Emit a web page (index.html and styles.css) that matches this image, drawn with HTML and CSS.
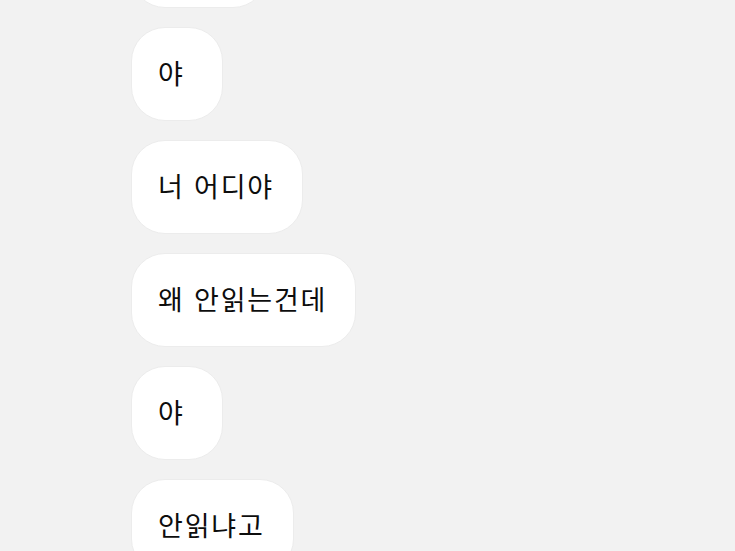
FILE: index.html
```html
<!DOCTYPE html>
<html lang="ko">
<head>
    <meta charset="UTF-8">
    <meta name="viewport" content="width=device-width, initial-scale=1.0">
    <title>채팅</title>
    <link rel="stylesheet" href="styles.css">
</head>
<body>
    <div class="chat-list">
        <div class="bubble">뭐하냐</div>
        <div class="bubble">야</div>
        <div class="bubble">너 어디야</div>
        <div class="bubble">왜 안읽는건데</div>
        <div class="bubble">야</div>
        <div class="bubble">안읽냐고</div>
    </div>
</body>
</html>
```

FILE: styles.css
```css
body {
    margin: 0;
    background-color: #f2f2f2;
    font-family: "Noto Sans CJK KR", "Noto Sans", sans-serif;
    overflow: hidden;
}

.chat-list {
    display: flex;
    flex-direction: column;
    align-items: flex-start;
    gap: 19px;
    margin-top: -86px;
    padding-left: 131px;
}

.bubble {
    box-sizing: border-box;
    min-width: 92px;
    height: 94px;
    padding: 0 28px 4px 26px;
    display: flex;
    align-items: center;
    background-color: #fff;
    border: 1px solid #ececec;
    border-radius: 34px;
    font-size: 27px;
    letter-spacing: 1.8px;
    color: #0d0d0d;
    white-space: nowrap;
}
```
